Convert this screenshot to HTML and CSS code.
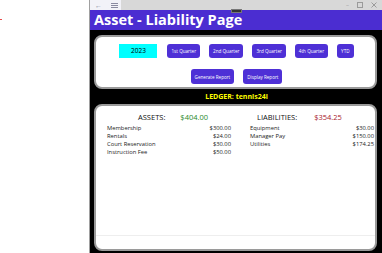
FILE: index.html
```html
<!DOCTYPE html>
<html lang="en">
<head>
    <meta charset="UTF-8">
    <meta name="viewport" content="width=device-width, initial-scale=1.0">
    <title>Asset - Liability Page</title>
    <link rel="stylesheet" href="styles.css">
</head>
<body>
    <div class="desktop">
        <div class="side">
            <span class="red-mark"></span>
        </div>

        <div class="window">
            <!-- Title bar -->
            <div class="titlebar">
                <div class="tb-left">
                    <span class="tb-icon">&#8592;</span>
                    <svg class="tb-menu" width="7" height="5" viewBox="0 0 7 5">
                        <rect x="0" y="0" width="7" height="1" fill="#8a8aa0"/>
                        <rect x="0" y="2" width="7" height="1" fill="#8a8aa0"/>
                        <rect x="0" y="4" width="7" height="1" fill="#8a8aa0"/>
                    </svg>
                </div>
                <div class="tb-right">
                    <span class="tb-btn">&#8211;</span>
                    <svg class="tb-btn-svg" width="6" height="6" viewBox="0 0 6 6">
                        <rect x="0.5" y="0.5" width="5" height="5" fill="none" stroke="#9a9a9a"/>
                    </svg>
                    <svg class="tb-btn-svg" width="6" height="6" viewBox="0 0 6 6">
                        <path d="M0.5 0.5 L5.5 5.5 M5.5 0.5 L0.5 5.5" stroke="#9a9a9a"/>
                    </svg>
                </div>
            </div>
            <span class="bar-chip"></span>

            <!-- Page header -->
            <div class="page-header">Asset - Liability Page</div>

            <div class="content">
                <!-- Period selection -->
                <div class="card controls">
                    <div class="btn-row">
                        <div class="year-box">2023</div>
                        <button class="btn">1st Quarter</button>
                        <button class="btn">2nd Quarter</button>
                        <button class="btn">3rd Quarter</button>
                        <button class="btn">4th Quarter</button>
                        <button class="btn">YTD</button>
                    </div>
                    <div class="btn-row">
                        <button class="btn btn-lg">Generate Report</button>
                        <button class="btn btn-lg">Display Report</button>
                    </div>
                </div>

                <div class="ledger">LEDGER: tennis24l</div>

                <!-- Report -->
                <div class="card report">
                    <div class="columns">
                        <div class="col assets">
                            <div class="col-head">
                                <span class="head-label">ASSETS:</span>
                                <span class="head-total green">$404.00</span>
                            </div>
                            <div class="line"><span>Membership</span><span>$300.00</span></div>
                            <div class="line"><span>Rentals</span><span>$24.00</span></div>
                            <div class="line"><span>Court Reservation</span><span>$30.00</span></div>
                            <div class="line"><span>Instruction Fee</span><span>$50.00</span></div>
                        </div>
                        <div class="col liabilities">
                            <div class="col-head">
                                <span class="head-label">LIABILITIES:</span>
                                <span class="head-total red">$354.25</span>
                            </div>
                            <div class="line"><span>Equipment</span><span>$30.00</span></div>
                            <div class="line"><span>Manager Pay</span><span>$150.00</span></div>
                            <div class="line"><span>Utilities</span><span>$174.25</span></div>
                        </div>
                    </div>
                    <div class="report-foot"></div>
                </div>
            </div>
        </div>
    </div>
</body>
</html>
```

FILE: styles.css
```css
/* Reset */
* {
    margin: 0;
    padding: 0;
    box-sizing: border-box;
}

body {
    font-family: "Open Sans", "Noto Sans", sans-serif;
    background-color: #fff;
    width: 382px;
    height: 253px;
    overflow: hidden;
}

.desktop {
    display: flex;
    height: 253px;
}

/* Empty area left of the app window */
.side {
    width: 89px;
    flex-shrink: 0;
    padding-top: 19px;
}

.red-mark {
    display: block;
    width: 2px;
    height: 1px;
    background: #e84a4a;
}

.window {
    position: relative;
    flex: 1;
    display: flex;
    flex-direction: column;
    border-left: 1px solid #a0a0a0;
    background: #000;
}

/* Title bar */
.titlebar {
    height: 10px;
    display: flex;
    background: #d8d8d8;
}

.tb-left {
    width: 31px;
    display: flex;
    align-items: center;
    gap: 9px;
    padding-left: 5px;
    background: #f2f2f8;
}

.tb-icon {
    font-size: 7px;
    line-height: 7px;
    color: #8a8aa0;
}

.tb-right {
    flex: 1;
    display: flex;
    justify-content: flex-end;
    align-items: center;
    gap: 8px;
    padding-right: 5px;
}

.tb-btn {
    font-size: 6px;
    color: #9a9a9a;
    line-height: 6px;
}

.bar-chip {
    position: absolute;
    top: 9px;
    left: 141px;
    width: 11px;
    height: 4px;
    background: #333;
    border: 1px solid #777;
    z-index: 2;
}

/* Purple page header */
.page-header {
    height: 20px;
    background: #4b2dd1;
    color: #fff;
    font-weight: 700;
    font-size: 14.5px;
    line-height: 20px;
    padding-left: 4px;
}

.content {
    flex: 1;
    padding: 5px 5px 0 4px;
}

.card {
    background: #fff;
    border: 2px solid #9a9a9a;
    border-radius: 8px;
}

.controls {
    height: 54px;
    display: flex;
    flex-direction: column;
    align-items: center;
    gap: 11px;
    padding-top: 7px;
    padding-left: 2px;
}

.btn-row {
    display: flex;
    gap: 9px;
}

.year-box {
    width: 38px;
    height: 14px;
    background: #00ffff;
    color: #000;
    font-size: 6.5px;
    line-height: 14px;
    text-align: center;
    margin-right: 1px;
}

.btn {
    height: 14px;
    padding: 0 4px;
    background: #4e30d6;
    color: #fff;
    border: none;
    border-radius: 3px;
    font-family: "Open Sans", "Noto Sans", sans-serif;
    font-size: 4.6px;
    cursor: pointer;
}

.btn-lg {
    height: 15px;
}

.ledger {
    height: 15px;
    text-align: center;
    color: #ffff00;
    font-weight: 700;
    font-size: 7px;
    line-height: 16px;
    padding-left: 2px;
}

.report {
    height: 147px;
    display: flex;
    flex-direction: column;
    justify-content: space-between;
    padding-top: 6px;
}

.columns {
    display: flex;
    gap: 19px;
    padding-left: 11px;
    padding-right: 1px;
}

.col {
    width: 124px;
}

.col-head {
    display: flex;
    gap: 15px;
    font-size: 7.5px;
    line-height: 11px;
    color: #111;
    margin-bottom: 1px;
}

.assets .col-head {
    padding-left: 31px;
}

.liabilities .col-head {
    padding-left: 7px;
    gap: 17px;
}

.green {
    color: #2a8a2a;
}

.red {
    color: #a8202c;
}

.line {
    display: flex;
    justify-content: space-between;
    font-size: 5.8px;
    line-height: 8px;
    color: #222;
}

.report-foot {
    height: 14px;
    border-top: 1px solid #eeeeee;
}
```
